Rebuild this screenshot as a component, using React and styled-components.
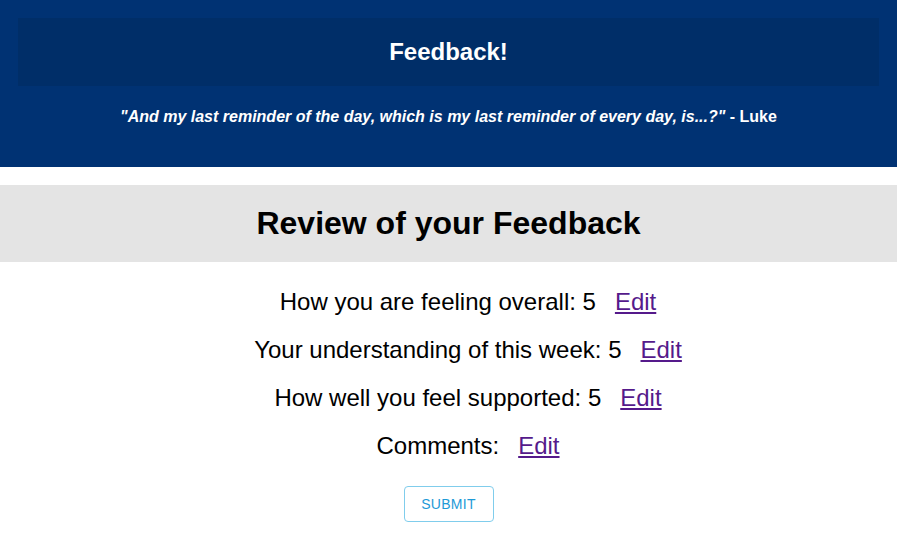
import React from "react";
import styled, { createGlobalStyle } from "styled-components";

const Global = createGlobalStyle`
  html, body { margin: 0; padding: 0; background: #fff; }
  body { font-family: "Liberation Sans", Arial, Helvetica, sans-serif; }
`;

const Header = styled.header`
  background: #003273;
  padding: 18px 18px 0;
  height: 167px;
  box-sizing: border-box;
  color: #fff;
`;

const TitleBox = styled.div`
  background: #002e68;
  height: 68px;
  display: flex;
  align-items: center;
  justify-content: center;
`;

const Title = styled.h1`
  margin: 0;
  font-size: 24px;
  font-weight: bold;
`;

const Quote = styled.p`
  margin: 22px 0 0;
  text-align: center;
  font-size: 16px;
  font-weight: bold;
`;

const QuoteText = styled.span`
  font-style: italic;
`;

const ReviewBand = styled.div`
  margin-top: 18px;
  background: #e4e4e4;
  height: 77px;
  display: flex;
  align-items: center;
  justify-content: center;
`;

const ReviewTitle = styled.h2`
  margin: 0;
  font-size: 32px;
  font-weight: bold;
  color: #000;
`;

const List = styled.div`
  display: flex;
  flex-direction: column;
  align-items: center;
  padding-top: 26px;
  gap: 20px;
`;

const Row = styled.div`
  font-size: 24px;
  line-height: 28px;
  color: #000;
  display: flex;
  gap: 19px;
  padding-left: 39px;
`;

const EditLink = styled.a`
  color: #551a8b;
  text-decoration: underline;
  cursor: pointer;
`;

const SubmitButton = styled.button`
  margin-top: 6px;
  width: 90px;
  height: 36px;
  border: 1px solid #80cdec;
  border-radius: 4px;
  background: #fff;
  color: #1d9ad7;
  font-family: "Liberation Sans", Arial, sans-serif;
  font-size: 14px;
  letter-spacing: 0.3px;
  text-transform: uppercase;
  cursor: pointer;
`;

const rows = [
  ["How you are feeling overall:", "5"],
  ["Your understanding of this week:", "5"],
  ["How well you feel supported:", "5"],
  ["Comments:", ""],
];

export default function App() {
  return (
    <>
      <Global />
      <Header>
        <TitleBox>
          <Title>Feedback!</Title>
        </TitleBox>
        <Quote>
          <QuoteText>
            "And my last reminder of the day, which is my last reminder of every day, is...?"
          </QuoteText>{" "}
          - Luke
        </Quote>
      </Header>
      <ReviewBand>
        <ReviewTitle>Review of your Feedback</ReviewTitle>
      </ReviewBand>
      <List>
        {rows.map(([label, value]) => (
          <Row key={label}>
            <span>
              {label} {value}
            </span>
            <EditLink>Edit</EditLink>
          </Row>
        ))}
        <SubmitButton>Submit</SubmitButton>
      </List>
    </>
  );
}
